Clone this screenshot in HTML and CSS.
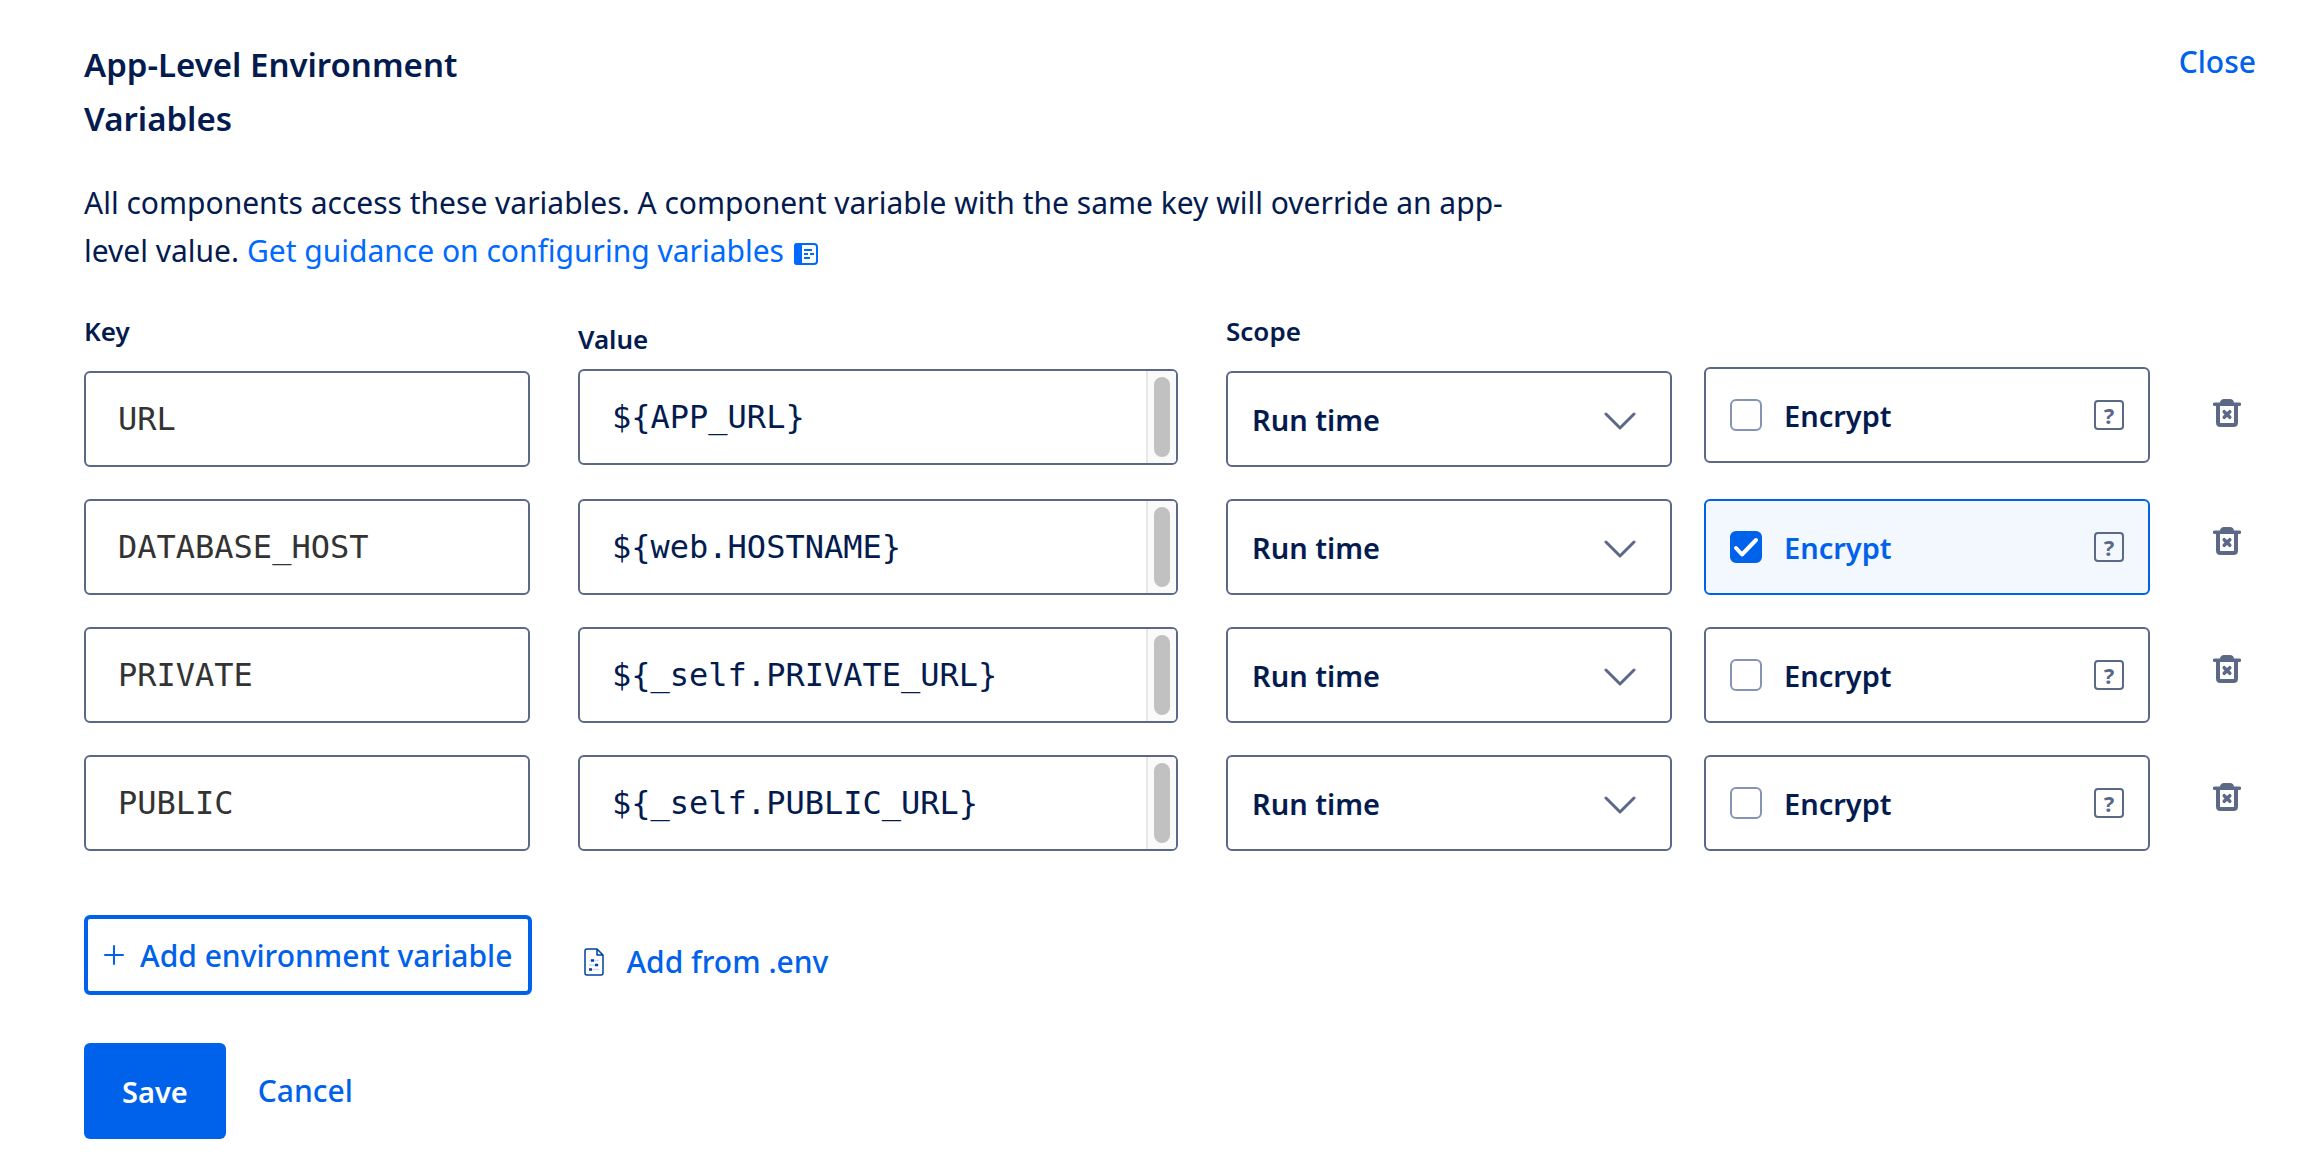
FILE: index.html
```html
<!DOCTYPE html>
<html lang="en">
<head>
  <meta charset="UTF-8">
  <meta name="viewport" content="width=device-width, initial-scale=1">
  <title>App-Level Environment Variables</title>
  <link rel="stylesheet" href="styles.css">
</head>
<body>
  <!-- shared icons -->
  <svg class="sprite" aria-hidden="true">
    <symbol id="chevron" viewBox="0 0 32 18">
      <path d="M2 2l14 14L30 2" fill="none" stroke="currentColor" stroke-width="3" stroke-linecap="round" stroke-linejoin="round"/>
    </symbol>
    <symbol id="trash" viewBox="0 0 28 28">
      <path d="M7 3.500Q7.500 0 11 0h6q3.500 0 4 3.500h5.500a1.500 1.500 0 0 1 0 3.500h-25a1.500 1.500 0 0 1 0-3.500z" fill="currentColor"/>
      <path d="M5 6v17.500q0 2.500 2.500 2.500h13q2.500 0 2.500-2.500V6" fill="none" stroke="currentColor" stroke-width="4"/>
      <path d="M11.200 12.700l5.600 5.600M16.800 12.700l-5.600 5.600" stroke="currentColor" stroke-width="3.500" stroke-linecap="round"/>
    </symbol>
  </svg>

  <main class="panel">
    <header class="panel-header">
      <h2>App-Level Environment Variables</h2>
      <button type="button" class="link-button">Close</button>
    </header>

    <p class="intro">
      All components access these variables. A component variable with the same key will override an app-level value.
      <a href="#">Get guidance on configuring variables
        <svg class="doc-icon" viewBox="0 0 24 22" aria-hidden="true">
          <rect x="1" y="1" width="22" height="20" rx="3" fill="none" stroke="currentColor" stroke-width="2"/>
          <path d="M3 0h5v22H3q-3 0-3-3V3q0-3 3-3z" fill="currentColor"/>
          <path d="M10 7h8M10 11h4M16 11h4M10 15h6" stroke="currentColor" stroke-width="2"/>
        </svg></a>
    </p>

    <form>
      <div class="row row-first">
        <div class="key">
          <label class="label" for="key-1">Key</label>
          <input class="box" id="key-1" type="text" value="URL">
        </div>
        <div class="value">
          <label class="label" for="value-1">Value</label>
          <div class="box value-box">
            <textarea id="value-1" rows="1">${APP_URL}</textarea>
            <span class="track"></span>
          </div>
        </div>
        <div class="options">
          <div class="scope">
            <label class="label" for="scope-1">Scope</label>
            <div class="select">
              <select class="box" id="scope-1"><option>Run time</option></select>
              <svg class="chevron"><use href="#chevron"/></svg>
            </div>
          </div>
          <div class="box encrypt">
            <label><input type="checkbox"> Encrypt</label>
            <button type="button" class="help" aria-label="About encryption">?</button>
          </div>
        </div>
        <button type="button" class="delete" aria-label="Delete URL"><svg><use href="#trash"/></svg></button>
      </div>

      <div class="row">
        <div class="key">
          <input class="box" type="text" value="DATABASE_HOST" aria-label="Key">
        </div>
        <div class="value">
          <div class="box value-box">
            <textarea rows="1" aria-label="Value">${web.HOSTNAME}</textarea>
            <span class="track"></span>
          </div>
        </div>
        <div class="options">
          <div class="scope">
            <div class="select">
              <select class="box" aria-label="Scope"><option>Run time</option></select>
              <svg class="chevron"><use href="#chevron"/></svg>
            </div>
          </div>
          <div class="box encrypt">
            <label><input type="checkbox" checked> Encrypt</label>
            <button type="button" class="help" aria-label="About encryption">?</button>
          </div>
        </div>
        <button type="button" class="delete" aria-label="Delete DATABASE_HOST"><svg><use href="#trash"/></svg></button>
      </div>

      <div class="row">
        <div class="key">
          <input class="box" type="text" value="PRIVATE" aria-label="Key">
        </div>
        <div class="value">
          <div class="box value-box">
            <textarea rows="1" aria-label="Value">${_self.PRIVATE_URL}</textarea>
            <span class="track"></span>
          </div>
        </div>
        <div class="options">
          <div class="scope">
            <div class="select">
              <select class="box" aria-label="Scope"><option>Run time</option></select>
              <svg class="chevron"><use href="#chevron"/></svg>
            </div>
          </div>
          <div class="box encrypt">
            <label><input type="checkbox"> Encrypt</label>
            <button type="button" class="help" aria-label="About encryption">?</button>
          </div>
        </div>
        <button type="button" class="delete" aria-label="Delete PRIVATE"><svg><use href="#trash"/></svg></button>
      </div>

      <div class="row">
        <div class="key">
          <input class="box" type="text" value="PUBLIC" aria-label="Key">
        </div>
        <div class="value">
          <div class="box value-box">
            <textarea rows="1" aria-label="Value">${_self.PUBLIC_URL}</textarea>
            <span class="track"></span>
          </div>
        </div>
        <div class="options">
          <div class="scope">
            <div class="select">
              <select class="box" aria-label="Scope"><option>Run time</option></select>
              <svg class="chevron"><use href="#chevron"/></svg>
            </div>
          </div>
          <div class="box encrypt">
            <label><input type="checkbox"> Encrypt</label>
            <button type="button" class="help" aria-label="About encryption">?</button>
          </div>
        </div>
        <button type="button" class="delete" aria-label="Delete PUBLIC"><svg><use href="#trash"/></svg></button>
      </div>

      <div class="add-actions">
        <button type="button" class="add-button">
          <svg viewBox="0 0 20 20" aria-hidden="true"><path d="M10 1v18M1 10h18" stroke="currentColor" stroke-width="2" stroke-linecap="round"/></svg>
          Add environment variable
        </button>
        <button type="button" class="link-button env-button">
          <svg viewBox="0 0 20 28" aria-hidden="true">
            <path d="M13 1H3Q1 1 1 3v22q0 2 2 2h14q2 0 2-2V7l-6-6v6h6" fill="none" stroke="#00419f" stroke-width="1.500" stroke-linejoin="round"/>
            <path d="M5 12.500h10M5 17h10M5 21.500h10" stroke="#c9dcfb" stroke-width="1.500"/>
            <path d="M7 12.500h3M11 17h3M5 21.500h3" stroke="#00419f" stroke-width="2.500"/>
          </svg>
          Add from .env
        </button>
      </div>

      <div class="form-actions">
        <button type="submit" class="save">Save</button>
        <button type="button" class="link-button">Cancel</button>
      </div>
    </form>
  </main>
</body>
</html>
```
FILE: styles.css
```css
* {
  box-sizing: border-box;
}

body {
  margin: 0;
  background: #fff;
  color: #031b4e;
  font-family: "Noto Sans", sans-serif;
  font-size: 30px;
}

button,
input,
select,
textarea {
  font: inherit;
  color: inherit;
  margin: 0;
}

button {
  padding: 0;
  border: none;
  background: none;
  cursor: pointer;
}

.sprite {
  display: none;
}

.panel {
  padding: 38px 44px 24px 84px;
}

.panel-header {
  display: flex;
  justify-content: space-between;
  align-items: flex-start;
}

h2 {
  max-width: 446px;
  margin: 0;
  font-size: 33px;
  font-weight: 600;
  line-height: 54px;
}

.link-button {
  color: #0061eb;
  font-size: 30px;
  font-weight: 500;
  line-height: 48px;
}

.intro {
  max-width: 1440px;
  margin: 33px 0 35px;
  line-height: 48px;
}

.intro a {
  color: #0069ff;
  text-decoration: none;
}

.doc-icon {
  width: 24px;
  height: 22px;
  margin-left: 2px;
  vertical-align: -3px;
}

/* variable rows */
.row {
  display: flex;
  align-items: flex-start;
  gap: 48px;
  margin-bottom: 32px;
}

.key {
  flex: 446 1 0;
}

.value {
  flex: 600 1 0;
}

.options {
  flex: 924 1 0;
  display: grid;
  grid-template-columns: 1fr 1fr;
  align-items: start;
  gap: 32px;
}

.label {
  display: block;
  margin-bottom: 19px;
  font-size: 26px;
  font-weight: 600;
  line-height: 42px;
}

.value .label {
  margin-bottom: 9px;
  padding-top: 8px;
}

.row-first .encrypt {
  margin-top: 57px;
}

.row-first .delete {
  margin-top: 61px;
}

.box {
  display: block;
  width: 100%;
  height: 96px;
  border: 2px solid #5b6987;
  border-radius: 6px;
  background: #fff;
}

.key .box {
  padding: 0 32px;
  color: #333;
  font-family: "DejaVu Sans Mono", monospace;
  font-size: 32px;
}

.value-box {
  display: flex;
  overflow: hidden;
}

.value-box textarea {
  flex: 1;
  min-width: 0;
  height: 92px;
  padding: 0 32px;
  border: none;
  background: none;
  font-family: "DejaVu Sans Mono", monospace;
  font-size: 32px;
  line-height: 92px;
  white-space: nowrap;
  overflow: hidden;
  resize: none;
}

.track {
  width: 30px;
  padding: 6px;
  border-left: 2px solid #e8e8e8;
  background: #fafafa;
}

.track::before {
  content: "";
  display: block;
  width: 16px;
  height: 80px;
  border-radius: 8px;
  background: #c1c1c1;
}

.select {
  position: relative;
}

.select select {
  padding: 0 24px;
  font-size: 29px;
  font-weight: 600;
  appearance: none;
}

.chevron {
  position: absolute;
  top: 41px;
  right: 36px;
  width: 32px;
  height: 18px;
  color: #5b6987;
  pointer-events: none;
}

.encrypt {
  display: flex;
  justify-content: space-between;
  align-items: center;
  padding: 0 24px;
  font-size: 29px;
  font-weight: 600;
}

.encrypt label {
  display: flex;
  align-items: center;
  gap: 22px;
}

.encrypt input {
  appearance: none;
  width: 32px;
  height: 32px;
  border: 2px solid #8594b5;
  border-radius: 6px;
  background: #fff;
}

.encrypt input:checked {
  border-color: #0061eb;
  background: #0061eb url("data:image/svg+xml,%3Csvg xmlns='http://www.w3.org/2000/svg' viewBox='0 0 28 28'%3E%3Cpath d='M4 15l6 6.500L24 7' fill='none' stroke='white' stroke-width='4' stroke-linecap='round' stroke-linejoin='round'/%3E%3C/svg%3E");
}

.encrypt:has(input:checked) {
  border-color: #0061eb;
  background: #f3f8ff;
}

.encrypt:has(input:checked) label {
  color: #0061eb;
}

.help {
  width: 30px;
  height: 30px;
  border: 2px solid #5b6987;
  border-radius: 4px;
  color: #5b6987;
  font-size: 22px;
  font-weight: 700;
  line-height: 26px;
}

.delete {
  flex: none;
  width: 58px;
  height: 84px;
  color: #5b6987;
}

.delete svg {
  display: block;
  width: 28px;
  height: 28px;
  margin: 0 auto;
}

/* buttons under the rows */
.add-actions {
  display: flex;
  align-items: center;
  gap: 52px;
  margin: 64px 0 48px;
}

.add-button,
.env-button {
  display: flex;
  align-items: center;
}

.add-button {
  gap: 16px;
  height: 80px;
  padding: 0 16px;
  border: 4px solid #0061eb;
  border-radius: 6px;
  color: #0061eb;
  font-size: 30px;
  font-weight: 500;
}

.add-button svg {
  width: 20px;
  height: 20px;
}

.env-button {
  gap: 22px;
  padding-top: 14px;
}

.env-button svg {
  width: 20px;
  height: 28px;
}

.form-actions {
  display: flex;
  align-items: center;
  gap: 32px;
}

.save {
  height: 96px;
  padding: 0 38px;
  border-radius: 6px;
  background: #0061eb;
  color: #fff;
  font-size: 29px;
  font-weight: 600;
}
```
